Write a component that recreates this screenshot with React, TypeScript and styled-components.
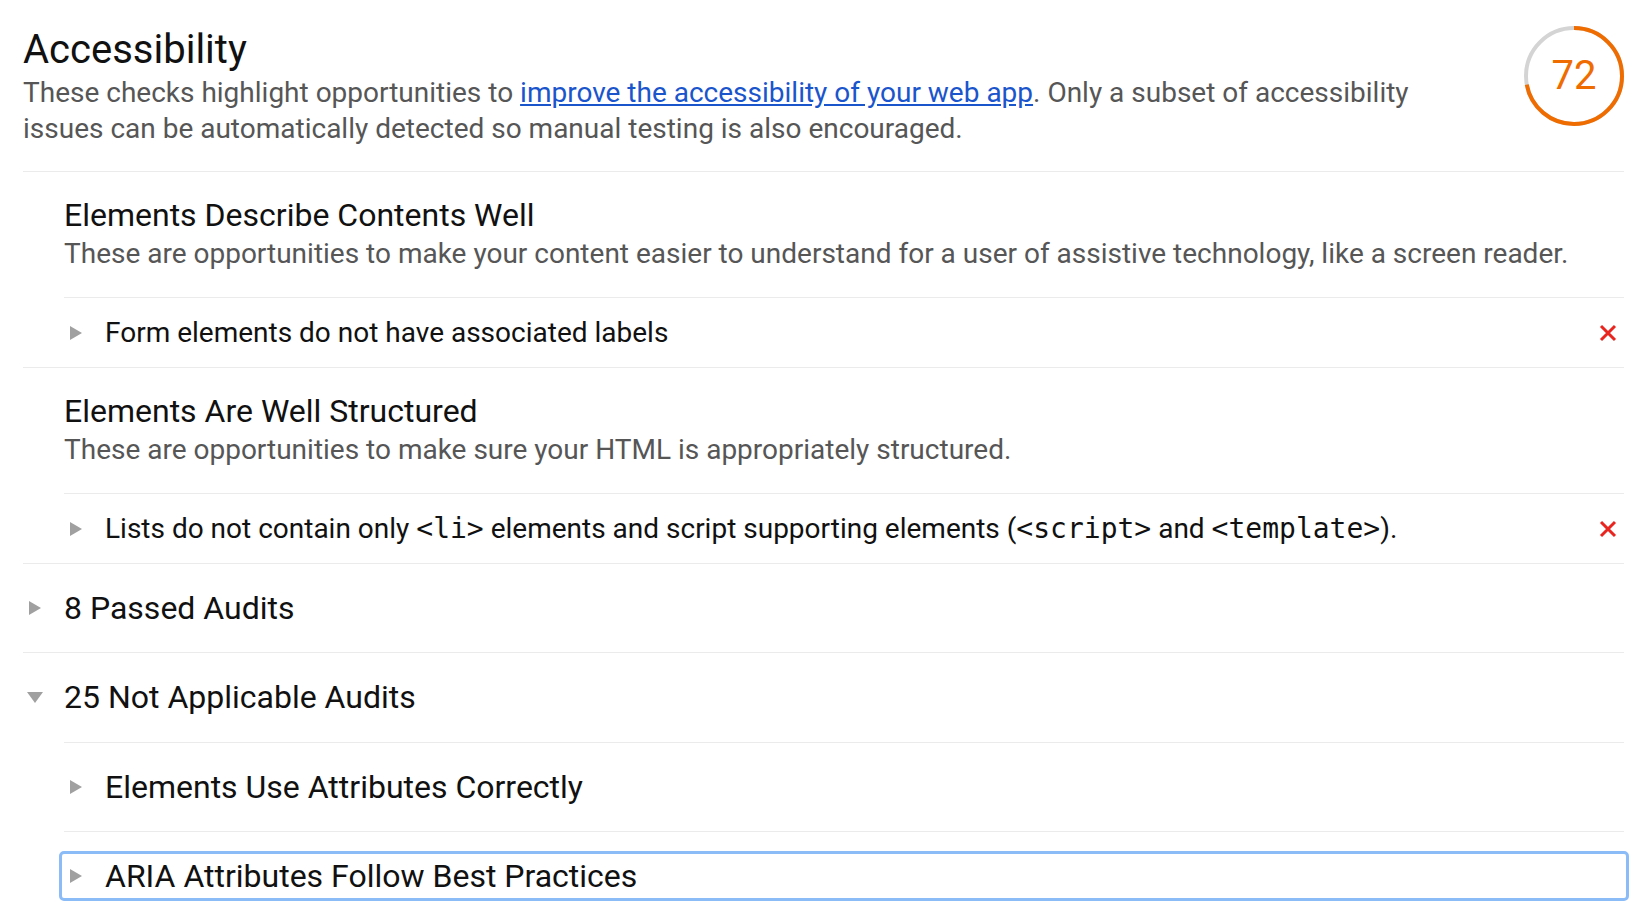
import React from "react";
import styled, { createGlobalStyle } from "styled-components";

const GlobalStyle = createGlobalStyle`
  html, body {
    margin: 0;
    padding: 0;
    background: #ffffff;
    overflow: hidden;
  }
  body {
    font-family: Roboto, "Liberation Sans", Arial, sans-serif;
    color: #212121;
    -webkit-font-smoothing: antialiased;
  }
  * { box-sizing: border-box; }
`;

const Page = styled.main`
  padding: 0 28px 0 23px;
  width: 100%;
`;

const Header = styled.header`
  display: flex;
  align-items: flex-start;
  padding: 26px 0 24px;
  border-bottom: 1px solid #ebebeb;
`;

const HeaderText = styled.div`
  flex: 1;
  margin-right: 80px;
`;

const Title = styled.h1`
  margin: 0;
  font-size: 40px;
  line-height: 48px;
  font-weight: 400;
  color: #111111;
`;

const Description = styled.p`
  margin: 1px 0 0;
  font-size: 28px;
  line-height: 36px;
  color: #565656;
`;

const Link = styled.a`
  color: #1a55cc;
  text-decoration: underline;
`;

const Gauge = styled.div`
  display: grid;
  width: 100px;
  height: 100px;
  flex: none;
  place-items: center;
  & > * {
    grid-area: 1 / 1;
  }
`;

const GaugeSvg = styled.svg`
  width: 100px;
  height: 100px;
  transform: rotate(-90deg);
`;

const ScoreValue = styled.span`
  font-size: 40px;
  line-height: 40px;
  color: #ef6c00;
`;

const Group = styled.section`
  border-bottom: 1px solid #ebebeb;
`;

const GroupHeader = styled.div`
  margin-left: 41px;
  padding: 23px 0 25px;
  border-bottom: 1px solid #ebebeb;
`;

const GroupTitle = styled.div`
  font-size: 32px;
  line-height: 40px;
  color: #111111;
`;

const GroupDescription = styled.div`
  margin-top: 1px;
  font-size: 28px;
  line-height: 36px;
  color: #565656;
`;

const AuditRow = styled.div`
  display: flex;
  align-items: center;
  margin-left: 41px;
  padding: 17px 7px 16px 0;
`;

const ArrowCell = styled.span`
  display: flex;
  align-items: center;
  width: 41px;
  flex: none;
`;

const ArrowBox = styled.span`
  display: flex;
  justify-content: center;
  align-items: center;
  width: 24px;
  height: 20px;
`;

const Arrow = styled.span<{ $open?: boolean }>`
  width: 0;
  height: 0;
  ${(p) =>
    p.$open
      ? `border-top: 11px solid #a0a0a0;
         border-left: 8px solid transparent;
         border-right: 8px solid transparent;`
      : `border-left: 12px solid #a0a0a0;
         border-top: 7px solid transparent;
         border-bottom: 7px solid transparent;`}
`;

const AuditTitle = styled.span`
  flex: 1;
  font-size: 28px;
  line-height: 36px;
  color: #111111;
`;

const Code = styled.code`
  font-family: "DejaVu Sans Mono", "Liberation Mono", monospace;
  font-size: 28px;
`;

const FailIcon = styled.svg`
  width: 18px;
  height: 18px;
  flex: none;
`;

const Collapsible = styled.section<{ $nested?: boolean; $last?: boolean }>`
  padding: 22px 0 ${(p) => (p.$last ? "0" : "22px")};
  ${(p) =>
    p.$nested
      ? "border-top: 1px solid #ebebeb;"
      : p.$last
      ? ""
      : "border-bottom: 1px solid #ebebeb;"}
`;

const Summary = styled.div<{ $focused?: boolean }>`
  display: flex;
  align-items: center;
  height: 44px;
  padding: 2px 0;
  font-size: 32px;
  line-height: 40px;
  color: #111111;
  ${(p) =>
    p.$focused
      ? `margin: 0 -2px;
         padding: 2px 2px;
         outline: 3px solid #8cbcf8;
         border-radius: 2px;`
      : ""}
`;

const NestedList = styled.div`
  margin-left: 41px;
  margin-top: 23px;
`;

const Fail = () => (
  <FailIcon viewBox="0 0 18 18">
    <path
      d="M2 2 L16 16 M16 2 L2 16"
      stroke="#e8261f"
      strokeWidth="3"
      fill="none"
    />
  </FailIcon>
);

const ScoreCircle = ({ score }: { score: number }) => {
  const r = 48;
  const c = 2 * Math.PI * r;
  return (
    <Gauge>
      <GaugeSvg viewBox="0 0 100 100">
        <circle cx="50" cy="50" r={r} fill="none" stroke="#d4d4d4" strokeWidth="4" />
        <circle
          cx="50"
          cy="50"
          r={r}
          fill="none"
          stroke="#ef6c00"
          strokeWidth="4"
          strokeDasharray={`${(score / 100) * c} ${c}`}
        />
      </GaugeSvg>
      <ScoreValue>{score}</ScoreValue>
    </Gauge>
  );
};

const Expander = ({ open }: { open?: boolean }) => (
  <ArrowCell>
    <ArrowBox>
      <Arrow $open={open} />
    </ArrowBox>
  </ArrowCell>
);

export default function App() {
  return (
    <>
      <GlobalStyle />
      <Page>
        <Header>
          <HeaderText>
            <Title>Accessibility</Title>
            <Description>
              These checks highlight opportunities to{" "}
              <Link href="#">improve the accessibility of your web app</Link>. Only a
              subset of accessibility issues can be automatically detected so manual
              testing is also encouraged.
            </Description>
          </HeaderText>
          <ScoreCircle score={72} />
        </Header>

        <Group>
          <GroupHeader>
            <GroupTitle>Elements Describe Contents Well</GroupTitle>
            <GroupDescription>
              These are opportunities to make your content easier to understand for a
              user of assistive technology, like a screen reader.
            </GroupDescription>
          </GroupHeader>
          <AuditRow>
            <Expander />
            <AuditTitle>Form elements do not have associated labels</AuditTitle>
            <Fail />
          </AuditRow>
        </Group>

        <Group>
          <GroupHeader>
            <GroupTitle>Elements Are Well Structured</GroupTitle>
            <GroupDescription>
              These are opportunities to make sure your HTML is appropriately
              structured.
            </GroupDescription>
          </GroupHeader>
          <AuditRow>
            <Expander />
            <AuditTitle>
              Lists do not contain only <Code>&lt;li&gt;</Code> elements and script
              supporting elements (<Code>&lt;script&gt;</Code> and{" "}
              <Code>&lt;template&gt;</Code>).
            </AuditTitle>
            <Fail />
          </AuditRow>
        </Group>

        <Collapsible>
          <Summary>
            <Expander />
            8 Passed Audits
          </Summary>
        </Collapsible>

        <Collapsible $last>
          <Summary>
            <Expander open />
            25 Not Applicable Audits
          </Summary>
          <NestedList>
            <Collapsible $nested>
              <Summary>
                <Expander />
                Elements Use Attributes Correctly
              </Summary>
            </Collapsible>
            <Collapsible $nested>
              <Summary $focused>
                <Expander />
                ARIA Attributes Follow Best Practices
              </Summary>
            </Collapsible>
          </NestedList>
        </Collapsible>
      </Page>
    </>
  );
}
